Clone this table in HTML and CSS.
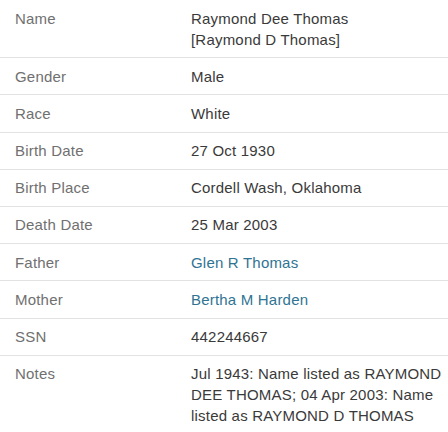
FILE: index.html
```html
<!DOCTYPE html>
<html>
<head>
<meta charset="utf-8">
<link rel="stylesheet" href="styles.css">
</head>
<body>
<table class="facts">
  <tr><th>Name</th><td>Raymond Dee Thomas<br>[Raymond D Thomas]</td></tr>
  <tr><th>Gender</th><td>Male</td></tr>
  <tr><th>Race</th><td>White</td></tr>
  <tr><th>Birth Date</th><td>27 Oct 1930</td></tr>
  <tr><th>Birth Place</th><td>Cordell Wash, Oklahoma</td></tr>
  <tr><th>Death Date</th><td>25 Mar 2003</td></tr>
  <tr><th>Father</th><td><a class="link" href="#">Glen R Thomas</a></td></tr>
  <tr><th>Mother</th><td><a class="link" href="#">Bertha M Harden</a></td></tr>
  <tr><th>SSN</th><td>442244667</td></tr>
  <tr><th>Notes</th><td>Jul 1943: Name listed as RAYMOND DEE THOMAS; 04 Apr 2003: Name listed as RAYMOND D THOMAS</td></tr>
</table>
</body>
</html>
```
FILE: styles.css
```css
html, body {
  margin: 0;
  padding: 0;
  background: #ffffff;
}
body {
  font-family: "Liberation Sans", Arial, sans-serif;
  font-size: 15px;
  line-height: 21px;
  letter-spacing: 0.2px;
}
.facts {
  width: 448px;
  border-collapse: collapse;
}
.facts tr + tr {
  border-top: 1px solid #e2e2e2;
}
.facts th {
  width: 176px;
  padding: 7.5px 0 7.7px 15px;
  text-align: left;
  vertical-align: top;
  font-weight: normal;
  color: #707070;
}
.facts td {
  padding: 7.5px 4px 7.7px 0;
  vertical-align: top;
  color: #3a3a3a;
}
.link {
  color: #2f7493;
  text-decoration: none;
}
```
